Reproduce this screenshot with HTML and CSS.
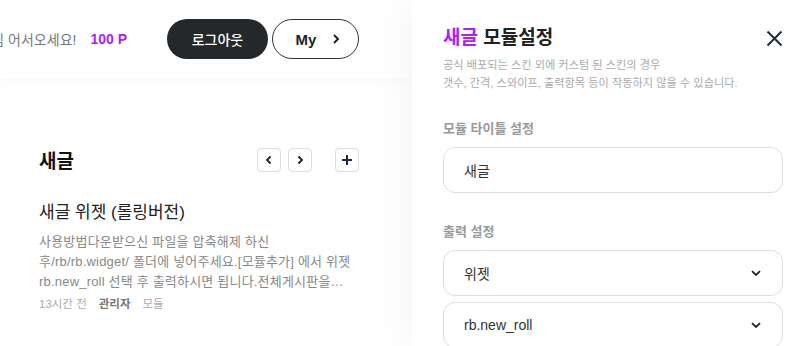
FILE: index.html
```html
<!DOCTYPE html>
<html lang="ko">

<head>
    <meta charset="UTF-8">
    <meta name="viewport" content="width=device-width, initial-scale=1.0">
    <title>새글 모듈설정</title>
    <link rel="stylesheet" href="styles.css">
</head>

<body>
    <div class="site">
        <header class="header">
            <span class="welcome">회원님 어서오세요!</span>
            <span class="point">100 P</span>
            <button class="btn-logout">로그아웃</button>
            <button class="btn-my">My
                <svg width="10" height="12" viewBox="0 0 10 12"><path d="M3 2l4 4-4 4" fill="none" stroke="#222" stroke-width="2"/></svg>
            </button>
        </header>

        <section class="module">
            <div class="module__head">
                <h3>새글</h3>
                <div class="module__tools">
                    <button class="tool"><svg width="10" height="10" viewBox="0 0 10 10"><path d="M6.5 1.5L3 5l3.5 3.5" fill="none" stroke="#222" stroke-width="1.8"/></svg></button>
                    <button class="tool"><svg width="10" height="10" viewBox="0 0 10 10"><path d="M3.5 1.5L7 5 3.5 8.5" fill="none" stroke="#222" stroke-width="1.8"/></svg></button>
                    <button class="tool tool--add"><svg width="12" height="12" viewBox="0 0 12 12"><path d="M6 1v10M1 6h10" fill="none" stroke="#1c2b4a" stroke-width="2"/></svg></button>
                </div>
            </div>
            <div class="post">
                <h4>새글 위젯 (롤링버전)</h4>
                <p>사용방법다운받으신 파일을 압축해제 하신 후/rb/rb.widget/ 폴더에 넣어주세요.[모듈추가] 에서 위젯 rb.new_roll 선택 후 출력하시면 됩니다.전체게시판을 대상으로 합니다.</p>
                <div class="post__meta">
                    <span>13시간 전</span>
                    <strong>관리자</strong>
                    <span>모듈</span>
                </div>
            </div>
        </section>
    </div>

    <aside class="panel">
        <div class="panel__head">
            <h2><span class="accent">새글</span> 모듈설정</h2>
            <button class="close">
                <svg width="17" height="17" viewBox="0 0 17 17"><path d="M1.5 1.5l14 14M15.5 1.5l-14 14" fill="none" stroke="#1c2b4a" stroke-width="2"/></svg>
            </button>
        </div>
        <p class="panel__desc">공식 배포되는 스킨 외에 커스텀 된 스킨의 경우<br>갯수, 간격, 스와이프, 출력항목 등이 작동하지 않을 수 있습니다.</p>

        <label class="field__label field__label--first">모듈 타이틀 설정</label>
        <div class="field">새글</div>

        <label class="field__label">출력 설정</label>
        <div class="field field--select">위젯
            <svg width="10" height="7" viewBox="0 0 10 7"><path d="M1 1.2L5 5l4-3.8" fill="none" stroke="#222" stroke-width="1.8"/></svg>
        </div>
        <div class="field field--select field--tight">rb.new_roll
            <svg width="10" height="7" viewBox="0 0 10 7"><path d="M1 1.2L5 5l4-3.8" fill="none" stroke="#222" stroke-width="1.8"/></svg>
        </div>
    </aside>
</body>

</html>
```

FILE: styles.css
```css
* {
  margin: 0;
  padding: 0;
  box-sizing: border-box;
}

body {
  width: 812px;
  height: 346px;
  overflow: hidden;
  display: flex;
  font-family: 'Liberation Sans', 'Noto Sans CJK KR', sans-serif;
  background-color: #ffffff;
  color: #222;
}

button {
  font-family: inherit;
  background: none;
  border: none;
  cursor: pointer;
}

.site {
  flex: 1;
  min-width: 0;
  overflow: hidden;
}

.header {
  height: 78px;
  display: flex;
  align-items: center;
  justify-content: flex-end;
  padding-right: 53px;
  background-color: #ffffff;
  box-shadow: 0 4px 14px rgba(0, 0, 0, 0.03);
  position: relative;
  white-space: nowrap;
}

.header > * {
  flex-shrink: 0;
}

.welcome {
  font-size: 14px;
  color: #777;
  margin-right: 14px;
}

.point {
  font-size: 14px;
  font-weight: 700;
  color: #aa20ff;
  margin-right: 40px;
}

.btn-logout {
  width: 101px;
  height: 40px;
  border-radius: 20px;
  background-color: #25282b;
  color: #ffffff;
  font-size: 14px;
  font-weight: 500;
  margin-right: 4px;
}

.btn-my {
  width: 87px;
  height: 40px;
  border-radius: 20px;
  border: 1px solid #333;
  background-color: #ffffff;
  font-size: 15px;
  font-weight: 700;
  color: #222;
  display: flex;
  align-items: center;
  justify-content: center;
  gap: 15px;
  padding-left: 6px;
}

.module {
  padding: 68px 53px 0 39px;
}

.module__head {
  display: flex;
  justify-content: space-between;
  align-items: center;
}

.module__head h3 {
  font-size: 19px;
  font-weight: 700;
  color: #111;
}

.module__tools {
  display: flex;
  gap: 7px;
}

.tool {
  width: 24px;
  height: 24px;
  border: 1px solid #ddd;
  border-radius: 4px;
  display: flex;
  align-items: center;
  justify-content: center;
  background-color: #ffffff;
}

.tool--add {
  margin-left: 16px;
}

.post {
  margin-top: 28px;
}

.post h4 {
  font-size: 17px;
  font-weight: 400;
  color: #222;
  line-height: 24px;
}

.post p {
  margin-top: 7px;
  font-size: 13px;
  letter-spacing: 0.2px;
  line-height: 20px;
  color: #888;
  display: -webkit-box;
  -webkit-line-clamp: 3;
  -webkit-box-orient: vertical;
  overflow: hidden;
  word-break: keep-all;
}

.post__meta {
  margin-top: 3px;
  font-size: 11.5px;
  color: #aaa;
  display: flex;
  gap: 12px;
}

.post__meta strong {
  color: #777;
  font-weight: 700;
}

.panel {
  width: 400px;
  flex-shrink: 0;
  padding: 22px 29px 0 31px;
  background-color: #ffffff;
  box-shadow: -10px 0 30px rgba(0, 0, 0, 0.035);
  position: relative;
}

.panel__head {
  display: flex;
  justify-content: space-between;
  align-items: center;
}

.panel__head h2 {
  font-size: 19px;
  font-weight: 700;
  color: #222;
  line-height: 32px;
}

.accent {
  color: #aa20ff;
}

.close {
  width: 17px;
  height: 17px;
  display: flex;
}

.panel__desc {
  margin-top: 2px;
  font-size: 11.2px;
  line-height: 18px;
  color: #aaa;
}

.field__label {
  display: block;
  margin-top: 30px;
  font-size: 13px;
  font-weight: 700;
  color: #999;
  line-height: 18px;
}

.field__label--first {
  margin-top: 28px;
}

.field {
  margin-top: 9px;
  height: 46px;
  border: 1px solid #ddd;
  border-radius: 12px;
  padding: 0 21px 0 20px;
  display: flex;
  align-items: center;
  justify-content: space-between;
  font-size: 14px;
  color: #333;
}

.field--tight {
  margin-top: 6px;
}
```
